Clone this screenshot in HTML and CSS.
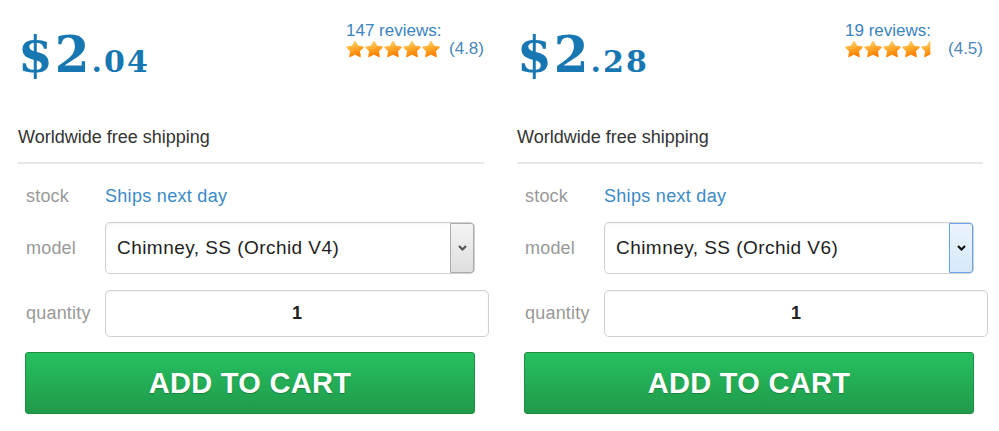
FILE: index.html
```html
<!DOCTYPE html>
<html lang="en">
<head>
<meta charset="utf-8">
<title>Products</title>
<link rel="stylesheet" href="styles.css">
</head>
<body>
<svg class="defs" width="0" height="0" aria-hidden="true">
  <defs>
    <linearGradient id="starGrad" x1="0" y1="0" x2="0.35" y2="1">
      <stop offset="0" stop-color="#ffdc85"/>
      <stop offset="0.45" stop-color="#ffb237"/>
      <stop offset="1" stop-color="#ff8000"/>
    </linearGradient>
    <symbol id="star" viewBox="0 0 18 18">
      <polygon points="9,1.6 11.6,6.4 17,7.2 13.1,11 14,16.4 9,13.8 4,16.4 4.9,11 1,7.2 6.4,6.4" fill="url(#starGrad)" stroke="url(#starGrad)" stroke-width="1.6" stroke-linejoin="round"/>
    </symbol>
    <clipPath id="halfClip"><rect x="0" y="0" width="9.3" height="18"/></clipPath>
  </defs>
</svg>
<div class="page">
  <section class="product">
    <div class="top">
      <div class="price"><span class="dollars">$2</span><span class="cents">.04</span></div>
      <div class="reviews">
        <div class="count">147 reviews:</div>
        <div class="rating">
          <svg class="stars" width="95" height="18" viewBox="0 0 95 18">
            <use href="#star" x="0" y="0" width="18" height="18"/>
            <use href="#star" x="19" y="0" width="18" height="18"/>
            <use href="#star" x="38" y="0" width="18" height="18"/>
            <use href="#star" x="57" y="0" width="18" height="18"/>
            <use href="#star" x="76" y="0" width="18" height="18"/>
          </svg>
          <span class="score">(4.8)</span>
        </div>
      </div>
    </div>
    <div class="ship">Worldwide free shipping</div>
    <div class="row row-stock">
      <span class="label">stock</span>
      <span class="value">Ships next day</span>
    </div>
    <div class="row row-model">
      <span class="label">model</span>
      <div class="select" role="combobox" aria-expanded="false">
        <span class="sel-text">Chimney, SS (Orchid V4)</span>
        <span class="arrow"><svg width="9" height="6" viewBox="0 0 9 6"><path d="M1 1 L4.5 4.5 L8 1" fill="none" stroke="#555" stroke-width="2.2"/></svg></span>
      </div>
    </div>
    <div class="row row-qty">
      <span class="label">quantity</span>
      <input class="qty" type="text" value="1">
    </div>
    <button class="cart" type="button">ADD TO CART</button>
  </section>

  <section class="product">
    <div class="top">
      <div class="price"><span class="dollars">$2</span><span class="cents">.28</span></div>
      <div class="reviews">
        <div class="count">19 reviews:</div>
        <div class="rating">
          <svg class="stars" width="95" height="18" viewBox="0 0 95 18">
            <use href="#star" x="0" y="0" width="18" height="18"/>
            <use href="#star" x="19" y="0" width="18" height="18"/>
            <use href="#star" x="38" y="0" width="18" height="18"/>
            <use href="#star" x="57" y="0" width="18" height="18"/>
            <g transform="translate(76 0)"><use href="#star" x="0" y="0" width="18" height="18" clip-path="url(#halfClip)"/></g>
          </svg>
          <span class="score">(4.5)</span>
        </div>
      </div>
    </div>
    <div class="ship">Worldwide free shipping</div>
    <div class="row row-stock">
      <span class="label">stock</span>
      <span class="value">Ships next day</span>
    </div>
    <div class="row row-model">
      <span class="label">model</span>
      <div class="select active" role="combobox" aria-expanded="false">
        <span class="sel-text">Chimney, SS (Orchid V6)</span>
        <span class="arrow"><svg width="9" height="6" viewBox="0 0 9 6"><path d="M1 1 L4.5 4.5 L8 1" fill="none" stroke="#111" stroke-width="2.2"/></svg></span>
      </div>
    </div>
    <div class="row row-qty">
      <span class="label">quantity</span>
      <input class="qty" type="text" value="1">
    </div>
    <button class="cart" type="button">ADD TO CART</button>
  </section>
</div>
</body>
</html>
```

FILE: styles.css
```css
html, body {
  margin: 0;
  padding: 0;
  background: #fff;
}
body {
  font-family: "Liberation Sans", Arial, sans-serif;
  color: #333;
}
.defs {
  display: block;
  width: 0;
  height: 0;
  overflow: hidden;
}
.page {
  display: flex;
}
.product {
  width: 499px;
  flex-shrink: 0;
  box-sizing: border-box;
  padding: 0 15px 0 18px;
}
.top {
  display: flex;
  justify-content: space-between;
  align-items: flex-start;
  height: 118px;
}
.price {
  padding-top: 31px;
  font-family: "DejaVu Serif", "Liberation Serif", serif;
  font-weight: bold;
  color: #1777b2;
  line-height: 48px;
  white-space: nowrap;
}
.dollars {
  font-size: 50px;
  letter-spacing: 2px;
}
.cents {
  font-size: 30px;
  letter-spacing: 2px;
}
.reviews {
  padding-top: 21px;
}
.count {
  font-size: 17px;
  line-height: 19px;
  color: #3a84c2;
}
.rating {
  display: flex;
  align-items: center;
  height: 18px;
}
.stars {
  display: block;
}
.score {
  margin-left: 8px;
  font-size: 17px;
  line-height: 18px;
  color: #4a86bb;
}
.ship {
  font-size: 18px;
  line-height: 38px;
  color: #333;
  padding-bottom: 6px;
  border-bottom: 2px solid #e8e8e8;
}
.row {
  display: flex;
  align-items: center;
}
.row-stock {
  height: 32px;
  margin-top: 16px;
}
.row-model {
  margin-top: 10px;
}
.row-qty {
  margin-top: 16px;
}
.label {
  width: 79px;
  flex-shrink: 0;
  padding-left: 8px;
  font-size: 18px;
  letter-spacing: 0.2px;
  color: #999;
}
.value {
  font-size: 18px;
  letter-spacing: 0.3px;
  color: #3a8ac9;
}
.select {
  width: 370px;
  height: 52px;
  flex-shrink: 0;
  box-sizing: border-box;
  border: 1px solid #d0d0d0;
  border-radius: 5px;
  display: flex;
  background: #fff;
  box-shadow: inset 0 1px 2px rgba(0,0,0,0.06);
}
.sel-text {
  flex: 1;
  display: flex;
  align-items: center;
  padding-left: 11px;
  font-size: 19px;
  letter-spacing: 0.45px;
  color: #1e1e1e;
}
.arrow {
  width: 24px;
  box-sizing: border-box;
  border: 1px solid #acacac;
  border-radius: 0 3px 3px 0;
  background: linear-gradient(#f4f4f4, #dedede);
  display: flex;
  align-items: center;
  justify-content: center;
}
.select.active .arrow {
  border-color: #6aa6e4;
  background: linear-gradient(#eaf4fe, #d6e8fb);
}
.qty {
  width: 384px;
  height: 47px;
  flex-shrink: 0;
  box-sizing: border-box;
  margin: 0;
  padding: 0;
  border: 1px solid #d0d0d0;
  border-radius: 5px;
  text-align: center;
  font-family: "Liberation Sans", Arial, sans-serif;
  font-weight: bold;
  font-size: 18px;
  color: #222;
  background: #fff;
  box-shadow: inset 0 1px 2px rgba(0,0,0,0.05);
}
.cart {
  display: block;
  margin: 15px 0 0 7px;
  width: 450px;
  height: 62px;
  box-sizing: border-box;
  border: 1px solid #1f8c43;
  border-radius: 3px;
  background: linear-gradient(#26c060, #209a4a);
  color: #fff;
  font-family: "Liberation Sans", Arial, sans-serif;
  font-weight: bold;
  font-size: 29px;
  letter-spacing: 0.3px;
  text-shadow: 0 1px 1px rgba(0,60,20,0.35);
  padding: 0;
  cursor: pointer;
}
```
